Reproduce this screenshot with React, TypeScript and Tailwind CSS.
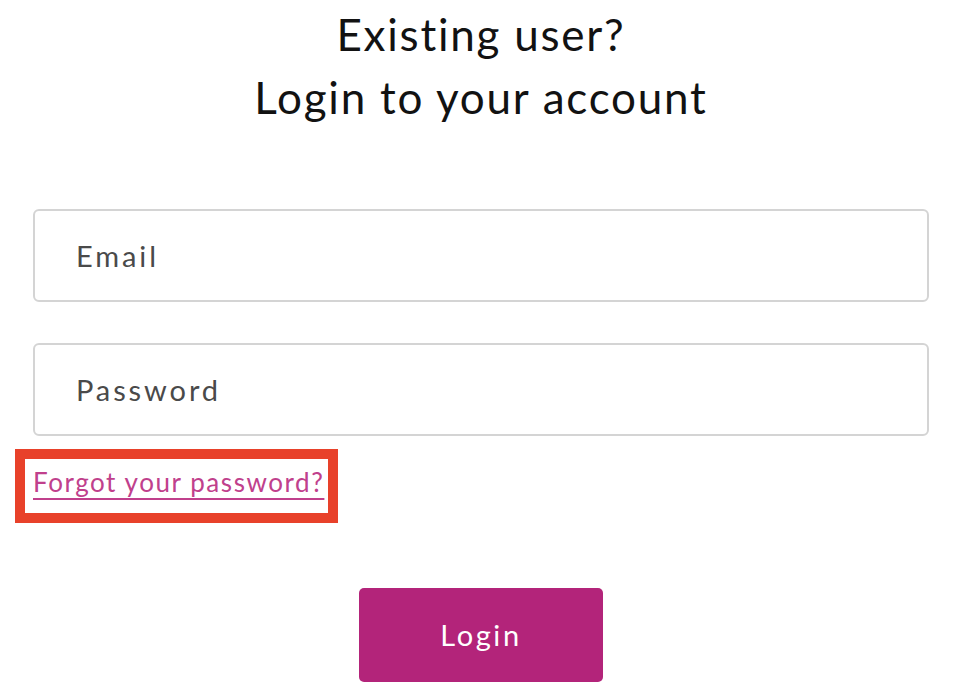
import React from "react";

export default function App() {
  const font = { fontFamily: "Lato, 'Noto Sans', sans-serif" };
  return (
    <div className="min-h-[700px] w-[956px] bg-white" style={font}>
      <div className="ml-[33px] flex w-[896px] flex-col">
        <h1 className="mt-[3px] text-center text-[44px] font-normal leading-[63px] tracking-[0.04em] text-[#121212]">
          Existing user?
          <br />
          Login to your account
        </h1>
        <div className="mt-[80px] flex h-[93px] items-center rounded-[6px] border-2 border-[#d4d4d4] pl-[41px] text-[29px] tracking-[0.1em] text-[#4a4a4a]">
          Email
        </div>
        <div className="mt-[41px] flex h-[93px] items-center rounded-[6px] border-2 border-[#d4d4d4] pl-[41px] text-[29px] tracking-[0.1em] text-[#4a4a4a]">
          Password
        </div>
        <div className="mt-[31px] flex">
          <div className="relative">
            <a
              href="#"
              className="block text-[26px] leading-[30px] tracking-[0.06em] text-[#c0408c] underline decoration-[1.5px] underline-offset-[6px]"
            >
              Forgot your password?
            </a>
            <div className="pointer-events-none absolute left-[-18px] right-[-14px] top-[-18px] bottom-[-26px] border-[10px] border-[#e8412a]" />
          </div>
        </div>
        <div className="mt-[91px] flex justify-center">
          <button className="flex h-[94px] w-[244px] items-center justify-center rounded-[5px] bg-[#b3247a] text-[29px] tracking-[0.09em] text-white">
            Login
          </button>
        </div>
      </div>
    </div>
  );
}
